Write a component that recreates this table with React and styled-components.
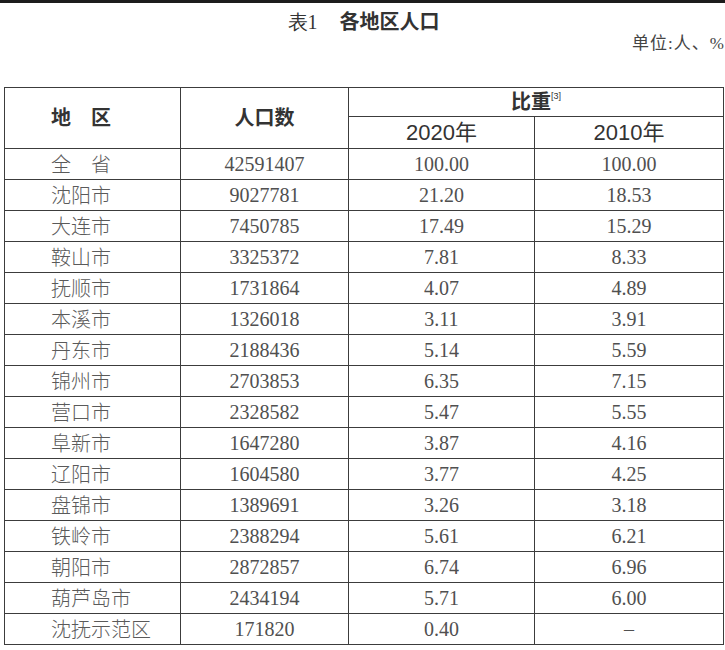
import styled, { createGlobalStyle } from 'styled-components';

const GlobalStyle = createGlobalStyle`
	html, body {
		margin: 0;
		padding: 0;
		background: #fff;
	}
	body {
		font-family: 'Liberation Serif', 'Noto Sans CJK SC', serif;
		color: #444;
	}
`;

const rows = [
	['全　省', '42591407', '100.00', '100.00'],
	['沈阳市', '9027781', '21.20', '18.53'],
	['大连市', '7450785', '17.49', '15.29'],
	['鞍山市', '3325372', '7.81', '8.33'],
	['抚顺市', '1731864', '4.07', '4.89'],
	['本溪市', '1326018', '3.11', '3.91'],
	['丹东市', '2188436', '5.14', '5.59'],
	['锦州市', '2703853', '6.35', '7.15'],
	['营口市', '2328582', '5.47', '5.55'],
	['阜新市', '1647280', '3.87', '4.16'],
	['辽阳市', '1604580', '3.77', '4.25'],
	['盘锦市', '1389691', '3.26', '3.18'],
	['铁岭市', '2388294', '5.61', '6.21'],
	['朝阳市', '2872857', '6.74', '6.96'],
	['葫芦岛市', '2434194', '5.71', '6.00'],
	['沈抚示范区', '171820', '0.40', '–'],
];

const Page = styled.div`
	padding: 0 2px 0 4px;
`;

const TopBar = styled.div`
	height: 3px;
	margin: 0 -2px 0 -4px;
	background: #1c1c1c;
`;

const Title = styled.h1`
	margin: 4px 0 0;
	font-size: 20px;
	line-height: 28px;
	font-weight: normal;
	text-align: center;
	color: #333;

	& .no {
		font-family: 'Liberation Serif', serif;
		margin-right: 22px;
	}

	& .name {
		font-family: 'Noto Sans CJK SC', sans-serif;
		font-weight: bold;
	}
`;

const Unit = styled.div`
	text-align: right;
	font-size: 17px;
	line-height: 20px;
	color: #444;
	letter-spacing: 1px;
	margin-right: -2px;
	margin-top: -2px;
`;

const Table = styled.table`
	margin-top: 33px;
	width: 719px;
	border-collapse: collapse;
	table-layout: fixed;
`;

const Col = styled.col`
	width: ${(p) => p.$w}px;
`;

const Head = styled.th`
	border: 1.5px solid #3c3c3c;
	font-family: 'Liberation Sans', 'Noto Sans CJK SC', sans-serif;
	font-weight: ${(p) => (p.$bold ? 'bold' : 'normal')};
	font-size: ${(p) => (p.$bold ? 20 : 22)}px;
	color: #333;
	height: ${(p) => p.$h}px;
	padding: 0;
	line-height: 1;
	text-align: ${(p) => (p.$left ? 'left' : 'center')};
	padding-left: ${(p) => (p.$left ? 46 : 0)}px;

	& sup {
		font-size: 9px;
		font-weight: normal;
		vertical-align: 10px;
	}
`;

const Cell = styled.td`
	border: 1.5px solid #3c3c3c;
	height: 30px;
	padding: 0;
	line-height: 1;
	font-size: 20px;
	color: #505050;
	text-align: center;
	font-family: 'Liberation Serif', serif;
`;

const NameCell = styled(Cell)`
	text-align: left;
	padding-left: 46px;
	font-family: 'Noto Sans CJK SC', sans-serif;
	font-weight: 300;
	color: #5a5a5a;
`;

export default function App() {
	return (
		<Page>
			<GlobalStyle />
			<TopBar />
			<Title>
				<span className="no">表1</span>
				<span className="name">各地区人口</span>
			</Title>
			<Unit>单位:人、%</Unit>
			<Table>
				<colgroup>
					<Col $w={176} />
					<Col $w={168} />
					<Col $w={186} />
					<Col $w={189} />
				</colgroup>
				<thead>
					<tr>
						<Head rowSpan={2} $bold $left>
							地　区
						</Head>
						<Head rowSpan={2} $bold>
							人口数
						</Head>
						<Head colSpan={2} $bold $h={28}>
							比重<sup>[3]</sup>
						</Head>
					</tr>
					<tr>
						<Head $h={31}>2020年</Head>
						<Head $h={31}>2010年</Head>
					</tr>
				</thead>
				<tbody>
					{rows.map(([name, pop, a, b]) => (
						<tr key={name}>
							<NameCell>{name}</NameCell>
							<Cell>{pop}</Cell>
							<Cell>{a}</Cell>
							<Cell>{b}</Cell>
						</tr>
					))}
				</tbody>
			</Table>
		</Page>
	);
}
